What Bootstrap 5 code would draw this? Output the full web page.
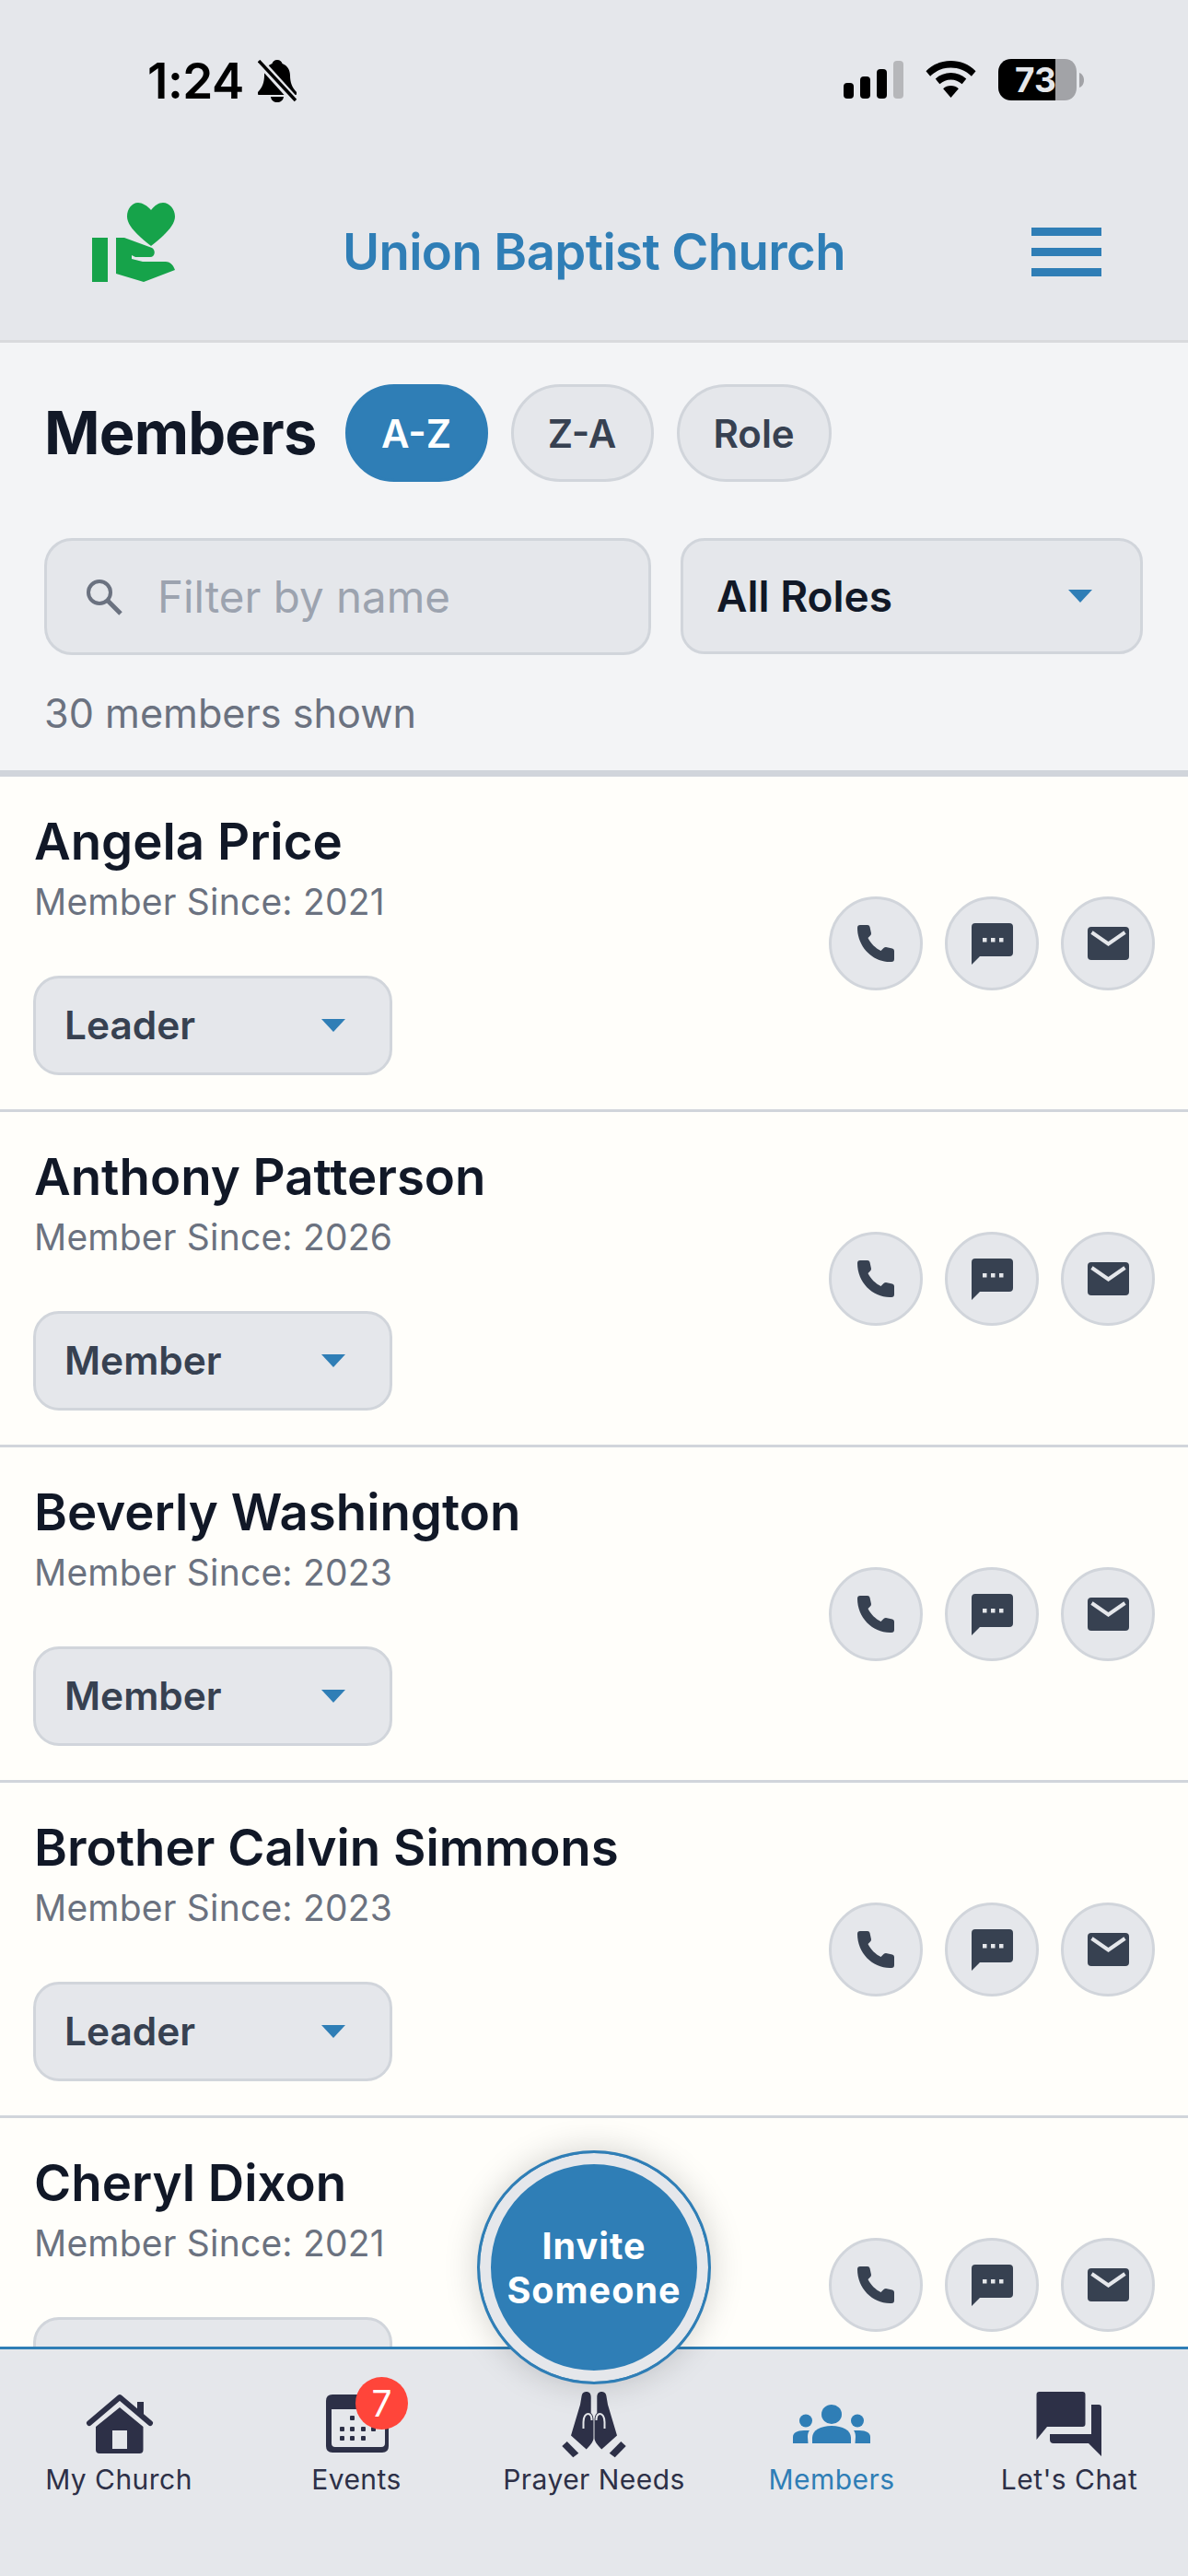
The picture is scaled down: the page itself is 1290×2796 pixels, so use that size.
<!DOCTYPE html>
<html lang="en">
<head>
<meta charset="utf-8">
<title>Members</title>
<link href="https://cdn.jsdelivr.net/npm/bootstrap@5.3.0/dist/css/bootstrap.min.css" rel="stylesheet">
<style>
  html, body { height: 100%; }
  body { font-family: Inter, "Liberation Sans", sans-serif; background: #fffefa; overflow: hidden; }
  .screen { width: 1290px; height: 2796px; overflow: hidden; }

  /* top area */
  .status-bar { height: 190px; background: #e5e7eb; padding: 58px 113px 0 160px; align-items: flex-start; }
  .status-time { font-size: 53px; line-height: 60px; font-weight: 600; color: #000; letter-spacing: -.5px; margin-right: 15px; }
  .app-bar { height: 182px; background: #e5e7eb; border-bottom: 3px solid #d9dadd; padding: 0 94px 13px 100px; }
  .app-logo { margin-bottom: 20px; }
  .church-name { font-size: 54.5px; font-weight: 600; color: #2f7eb6; letter-spacing: -.6px; line-height: 60px; margin-right: 20px; }
  .burger span { display: block; width: 76px; height: 9px; background: #2f7eb6; margin-bottom: 13px; }
  .burger span:last-child { margin-bottom: 0; }

  /* filter panel */
  .filter-panel { background: #f3f4f6; height: 471px; border-bottom: 7px solid #d1d5db; padding: 45px 48px 0 48px; }
  .sort-row { gap: 25px; }
  .page-title { font-size: 65px; line-height: 106px; font-weight: 700; color: #111827; margin: 0 6px 0 0; letter-spacing: -.8px; }
  .sort-pill { height: 106px; width: 155px; border-radius: 53px; border: 3px solid #d1d5db; background: #e5e7eb; color: #374151; font-size: 42px; font-weight: 600; }
  .sort-pill.is-on { background: #2f7eb6; border-color: #2f7eb6; color: #fff; }
  .sort-pill.is-wide { width: 168px; }
  .filter-row { margin-top: 61px; gap: 32px; }
  .name-box { width: 659px; height: 127px; border-radius: 30px; background: #e5e7eb; border: 3px solid #d1d5db; padding-left: 42px; }
  .name-box input { border: 0; background: transparent; outline: 0; font-size: 47.5px; width: 520px; margin-left: 38px; color: #111827; padding: 0; }
  .name-box input::placeholder { color: #9ca3af; opacity: 1; }
  .role-box { width: 502px; height: 126px; border-radius: 26px; background: #e5e7eb; border: 3px solid #d1d5db; padding: 0 52px 0 36px; font-size: 46px; font-weight: 600; color: #111827; }
  .caret-down { width: 0; height: 0; border-left: 13px solid transparent; border-right: 13px solid transparent; border-top: 14px solid #2f7eb6; }
  .shown-count { margin-top: 38px; font-size: 43.2px; line-height: 50px; color: #6b7280; }

  /* member rows */
  .member-row { height: 364px; background: #fffefa; border-bottom: 3px solid #d1d5db; padding: 38px 36px 0 36px; }
  .member-name { font-size: 54.6px; line-height: 64px; font-weight: 600; color: #111827; margin: 0 0 0 1px; }
  .member-since { font-size: 39px; line-height: 50px; color: #6b7280; margin: 9px 0 0 1px; letter-spacing: .2px; }
  .role-pick { width: 390px; height: 108px; margin-top: 55px; border-radius: 28px; background: #e5e7eb; border: 3px solid #d1d5db; padding: 0 48px 0 31px; font-size: 42.4px; font-weight: 600; color: #374151; }
  .contact-set { gap: 24px; margin-top: 92px; }
  .contact-btn { width: 102px; height: 102px; border-radius: 50%; background: #e5e7eb; border: 3px solid #d1d5db; }
  .contact-btn svg { fill: #374151; }

  /* bottom */
  .tab-bar { left: 0; right: 0; bottom: 0; height: 249px; background: #e5e7eb; border-top: 3px solid #2f7eb6; padding-top: 46px; z-index: 5; }
  .tab-item { width: 258px; color: #2d3047; font-size: 30px; line-height: 40px; letter-spacing: .45px; }
  .tab-item svg { display: block; height: 70px; width: 100px; fill: #2d3047; margin-bottom: 5px; overflow: visible; }
  .tab-item.is-on { color: #2f7eb6; }
  .tab-item.is-on svg { fill: #2f7eb6; }
  .tab-count { top: -16px; left: 128px; width: 57px; height: 57px; border-radius: 50%; background: #ff453a; color: #fff; font-size: 39px; line-height: 57px; text-align: center; letter-spacing: 0; }
  .invite-btn { left: 518px; top: 2334px; width: 254px; height: 254px; padding-top: 2px; border-radius: 50%; background: #2f7eb6; border: 3px solid #2f7eb6; box-shadow: inset 0 0 0 12px #e5e7eb, 0 0 36px rgba(0,0,0,.18); color: #fff; font-size: 39.5px; line-height: 48px; font-weight: 700; letter-spacing: 1px; z-index: 6; text-align: center; }
</style>
</head>
<body>
<div class="screen position-relative">

  <div class="status-bar d-flex justify-content-between">
    <div class="d-flex align-items-center">
      <span class="status-time">1:24</span>
      <svg width="42" height="46" viewBox="0 0 42 46">
        <path d="M21 0c3 0 5 2 5.500 4C32 6 35 11 35 17c0 7 2 13 7 18 1 2 0 3-2 3H2c-2 0-3-1-2-3 5-5 7-11 7-18 0-6 3-11 8.500-13C16 2 18 0 21 0zM14 40h14c-.5 4-3.500 6-7 6s-6.500-2-7-6z" fill="#000"/>
        <path d="M2 2l38 42" stroke="#e5e7eb" stroke-width="9"/>
        <path d="M1 1l40 43" stroke="#000" stroke-width="3.500"/>
      </svg>
    </div>
    <div class="d-flex align-items-center" style="margin-top:6px">
      <svg width="65" height="41" viewBox="0 0 65 41">
        <rect x="0" y="24" width="11" height="17" rx="4" fill="#000"/>
        <rect x="18" y="17" width="11" height="24" rx="4" fill="#000"/>
        <rect x="36" y="9" width="11" height="32" rx="4" fill="#000"/>
        <rect x="54" y="0" width="11" height="41" rx="4" fill="#b6b7ba"/>
      </svg>
      <svg width="57" height="41" viewBox="0 0 58 44" style="margin-left:23px">
        <path d="M29 0c11 0 21 4 29 12l-5 6C46 11 38 8 29 8S12 11 5 18l-5-6C8 4 18 0 29 0z"/>
        <path d="M29 14c7 0 13 2.500 18 7l-5 6c-4-3-8-5-13-5s-9 2-13 5l-5-6c5-4.500 11-7 18-7z"/>
        <path d="M29 29c3.500 0 6.500 1 9 3.500L29 43l-9-10.500c2.500-2.500 5.500-3.500 9-3.500z"/>
      </svg>
      <svg width="93" height="45" viewBox="0 0 93 45" style="margin-left:23px">
        <path d="M14 0h48v45H14C6 45 0 39 0 31V14C0 6 6 0 14 0z" fill="#000"/>
        <path d="M62 0h10c8 0 13 6 13 14v17c0 8-5 14-13 14H62z" fill="#a2a3a7"/>
        <path d="M88 15c3 1 5 4 5 8s-2 7-5 8z" fill="#a2a3a7"/>
        <text x="18" y="36" font-family="Inter, sans-serif" font-size="37" font-weight="700" fill="#e5e7eb">73</text>
      </svg>
    </div>
  </div>

  <div class="app-bar d-flex align-items-center justify-content-between">
    <svg class="app-logo" width="90" height="86" viewBox="0 0 90 86" fill="#16a34a">
      <path d="M64 8C60 3 54 0 50 0 43 0 38 7 38 15c0 10 12 21 26 32 14-11 26-22 26-32 0-8-6-15-13-15-5 0-9 3-13 8z"/>
      <rect x="0" y="38" width="17" height="48"/>
      <path d="M26 38h9l30 11c4 2 4 10-2 10H47l-4-2v4l12 3h25c4 0 8 3 10 9L56 86 26 77z"/>
    </svg>
    <div class="church-name">Union Baptist Church</div>
    <div class="burger"><span></span><span></span><span></span></div>
  </div>

  <div class="filter-panel">
    <div class="sort-row d-flex align-items-center">
      <h1 class="page-title">Members</h1>
      <div class="sort-pill is-on d-flex align-items-center justify-content-center">A-Z</div>
      <div class="sort-pill d-flex align-items-center justify-content-center">Z-A</div>
      <div class="sort-pill is-wide d-flex align-items-center justify-content-center">Role</div>
    </div>
    <div class="filter-row d-flex align-items-start">
      <div class="name-box d-flex align-items-center">
        <svg width="40" height="40" viewBox="0 0 40 40" fill="none" stroke="#6b7280" stroke-width="4"><circle cx="15" cy="15" r="12"/><path d="M24 24l14 14" stroke-width="5"/></svg>
        <input type="text" placeholder="Filter by name">
      </div>
      <div class="role-box d-flex align-items-center justify-content-between">
        <span>All Roles</span><i class="caret-down"></i>
      </div>
    </div>
    <div class="shown-count">30 members shown</div>
  </div>

  <div id="list"></div>

  <div class="invite-btn position-absolute d-flex align-items-center justify-content-center">Invite<br>Someone</div>

  <div class="tab-bar position-absolute d-flex justify-content-center">
    <div class="tab-item d-flex flex-column align-items-center">
      <svg viewBox="0 0 100 70">
        <path d="M18 34L51 6l33 28" fill="none" stroke="#2d3047" stroke-width="6" stroke-linecap="round" stroke-linejoin="round"/>
        <path d="M70 11h7v18l-7-6z"/>
        <path d="M51 17l25.500 21v25q0 4-4 4H29q-4 0-4-4V38zM43 42v20h16V42z" fill-rule="evenodd"/>
      </svg>
      My Church
    </div>
    <div class="tab-item d-flex flex-column align-items-center position-relative">
      <svg viewBox="0 0 100 70">
        <path d="M17 10q0-7 7-7h54q7 0 7 7v49q0 7-7 7H24q-7 0-7-7zM23 19v37q0 4 4 4h50q4 0 4-4V19z" fill-rule="evenodd"/>
        <g><rect x="43" y="26" width="5" height="5" rx="1"/><rect x="32" y="38" width="5" height="5" rx="1"/><rect x="43" y="38" width="5" height="5" rx="1"/><rect x="55" y="38" width="5" height="5" rx="1"/><rect x="66" y="38" width="5" height="5" rx="1"/><rect x="32" y="48" width="5" height="5" rx="1"/><rect x="43" y="48" width="5" height="5" rx="1"/><rect x="55" y="48" width="5" height="5" rx="1"/></g>
      </svg>
      <span class="tab-count position-absolute">7</span>
      Events
    </div>
    <div class="tab-item d-flex flex-column align-items-center">
      <svg viewBox="0 0 100 70">
        <g>
          <path d="M41.700 0C45 0 46.700 2 46.700 6V23C49 25 49.500 28 49.500 32V50C49.500 53 48 56 41.700 62.500L25 47.500L35 14L36.700 4C37.500 1 39 0 41.700 0Z"/>
          <path d="M20.700 54L33.300 66.700L27.300 71.300L15.300 59Z"/>
          <path d="M38.500 40V33C38.500 27 41 24 43.500 24C46 24 47.500 27 47.500 31" fill="none" stroke="#e5e7eb" stroke-width="2"/>
        </g>
        <g transform="translate(100,0) scale(-1,1)">
          <path d="M41.700 0C45 0 46.700 2 46.700 6V23C49 25 49.500 28 49.500 32V50C49.500 53 48 56 41.700 62.500L25 47.500L35 14L36.700 4C37.500 1 39 0 41.700 0Z"/>
          <path d="M20.700 54L33.300 66.700L27.300 71.300L15.300 59Z"/>
          <path d="M38.500 40V33C38.500 27 41 24 43.500 24C46 24 47.500 27 47.500 31" fill="none" stroke="#e5e7eb" stroke-width="2"/>
        </g>
      </svg>
      Prayer Needs
    </div>
    <div class="tab-item d-flex flex-column align-items-center is-on">
      <svg viewBox="0 0 100 70">
        <ellipse cx="50" cy="24.500" rx="11" ry="10.500"/>
        <circle cx="22" cy="31.500" r="7"/>
        <circle cx="78" cy="31.500" r="7"/>
        <path d="M29 56V50C29 42 38 37 50 37s21 5 21 13v6z"/>
        <path d="M24.500 56H8v-7c0-4 4-7 12-7h6c-1.500 2-2 4-2 7z"/>
        <path d="M75.500 56H92v-7c0-4-4-7-12-7h-6c1.500 2 2 4 2 7z"/>
      </svg>
      Members
    </div>
    <div class="tab-item d-flex flex-column align-items-center">
      <svg viewBox="0 0 100 70">
        <path d="M14.500 3q0-3 3-3h47q3 0 3 3v32q0 3-3 3H26L14.500 52z"/>
        <path d="M74 14h8q3 0 3 3v53L71 56H33q-4 0-4-4v-6h45z"/>
      </svg>
      Let's Chat
    </div>
  </div>
</div>

<script>
  // rows are the same apart from the name, year and role
  const members = [
    ["Angela Price", 2021, "Leader"],
    ["Anthony Patterson", 2026, "Member"],
    ["Beverly Washington", 2023, "Member"],
    ["Brother Calvin Simmons", 2023, "Leader"],
    ["Cheryl Dixon", 2021, "Member"]
  ];
  const phone = '<svg width="41" height="41" viewBox="0 0 41 41"><path d="M3 0h8q2 0 2.500 2l1.500 7q0 1.500-1 2.500l-2.500 2.500c3 6 8 11 14 14l3-3q1-1 2.500-1l7 1.500q2 .5 2 2.500v9q0 3-3 3C17 41 0 24 0 3q0-3 3-3z"/></svg>';
  const sms = '<svg width="45" height="45" viewBox="0 0 45 45"><path d="M4 0h37q4 0 4 4v28q0 4-4 4H9l-9 9V4q0-4 4-4z"/><g fill="#e5e7eb"><rect x="12" y="16" width="4.500" height="4.500"/><rect x="21" y="16" width="4.500" height="4.500"/><rect x="30" y="16" width="4.500" height="4.500"/></g></svg>';
  const mail = '<svg width="45" height="36" viewBox="0 0 45 36"><rect width="45" height="36" rx="4"/><path d="M4.500 6l18 12.500L40.500 6" fill="none" stroke="#e5e7eb" stroke-width="4"/></svg>';
  document.getElementById("list").innerHTML = members.map(m => `
    <div class="member-row d-flex justify-content-between">
      <div>
        <p class="member-name">${m[0]}</p>
        <div class="member-since">Member Since: ${m[1]}</div>
        <div class="role-pick d-flex align-items-center justify-content-between"><span>${m[2]}</span><i class="caret-down"></i></div>
      </div>
      <div class="contact-set d-flex">
        <div class="contact-btn d-flex align-items-center justify-content-center">${phone}</div>
        <div class="contact-btn d-flex align-items-center justify-content-center">${sms}</div>
        <div class="contact-btn d-flex align-items-center justify-content-center">${mail}</div>
      </div>
    </div>`).join("");
</script>
<script src="https://cdn.jsdelivr.net/npm/bootstrap@5.3.0/dist/js/bootstrap.bundle.min.js"></script>
</body>
</html>
